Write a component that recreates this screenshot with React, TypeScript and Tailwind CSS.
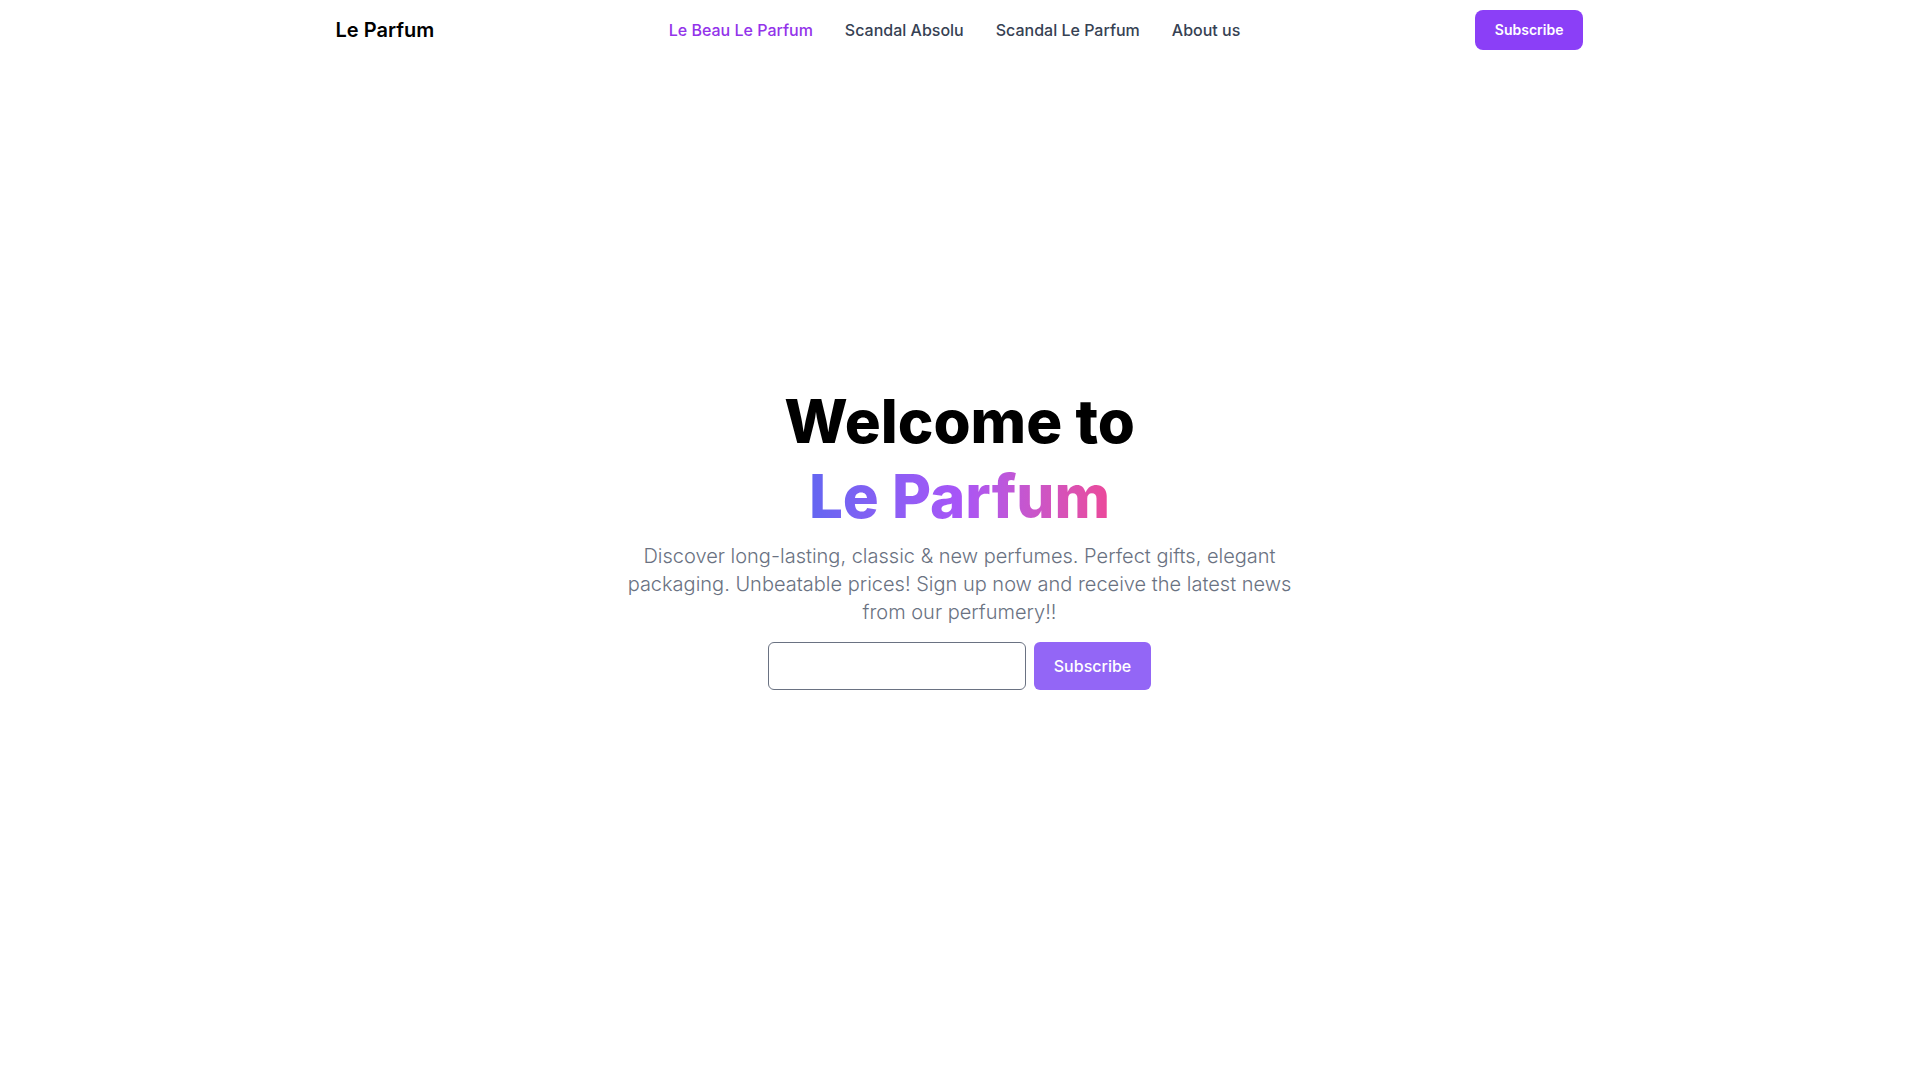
const links = [
  { label: "Le Beau Le Parfum", href: "#le-beau", active: true },
  { label: "Scandal Absolu", href: "#scandal-absolu" },
  { label: "Scandal Le Parfum", href: "#scandal-le-parfum" },
  { label: "About us", href: "#about" },
];

export default function App() {
  return (
    <div className="min-h-screen bg-white font-['Inter',sans-serif] text-gray-900">
      {/* Header */}
      <header className="sticky top-0 z-50 bg-white">
        <div className="mx-auto flex h-[60px] max-w-7xl items-center justify-between px-4">
          <a href="#" className="text-xl font-semibold text-black">
            Le Parfum
          </a>
          <nav className="flex items-center gap-8">
            {links.map((l) => (
              <a
                key={l.label}
                href={l.href}
                className={
                  l.active
                    ? "text-base font-medium text-[#9333ea]"
                    : "text-base font-medium text-gray-700 hover:text-[#9333ea]"
                }
              >
                {l.label}
              </a>
            ))}
          </nav>
          <button className="rounded-lg bg-[#8b3ff7] px-5 py-2.5 text-sm font-semibold text-white hover:bg-[#7c2ee6]">
            Subscribe
          </button>
        </div>
      </header>

      {/* Hero */}
      <section className="flex h-[calc(100vh-60px)] items-center justify-center px-4 pb-[66px]">
        <div className="flex flex-col items-center text-center">
          <h1 className="text-6xl leading-tight font-extrabold text-black">
            Welcome to
            <br />
            <span className="bg-gradient-to-r from-[#6366f1] via-[#a855f7] to-[#ec4899] bg-clip-text text-transparent">
              Le Parfum
            </span>
          </h1>
          <p className="mt-2 max-w-[700px] text-xl font-light text-gray-500">
            Discover long-lasting, classic &amp; new perfumes. Perfect gifts, elegant packaging.
            Unbeatable prices! Sign up now and receive the latest news from our perfumery!!
          </p>
          <form className="mt-4 flex items-center gap-2" onSubmit={(e) => e.preventDefault()}>
            <input
              type="email"
              className="h-12 w-[258px] rounded-md border border-gray-500 bg-white px-3 text-base outline-none focus:border-[#8b3ff7]"
            />
            <button
              type="submit"
              className="h-12 rounded-md bg-[#9366f6] px-5 text-base font-medium text-white hover:bg-[#8152ee]"
            >
              Subscribe
            </button>
          </form>
        </div>
      </section>

      {/* Sections below the fold */}
      <section id="le-beau" className="h-[940px]" />
      <section id="scandal-absolu" className="h-[940px]" />
      <section id="about" className="h-[940px]" />
    </div>
  );
}
